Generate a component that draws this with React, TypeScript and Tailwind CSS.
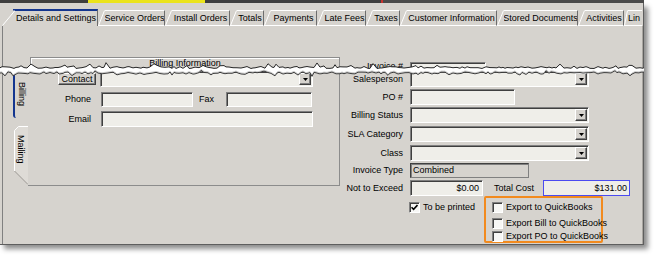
import React from "react";

function seeded(seed: number) {
  let s = seed;
  return () => {
    s = (s * 9301 + 49297) % 233280;
    return s / 233280;
  };
}

function Tear() {
  const r = seeded(11);
  const up: [number, number][] = [];
  const lo: [number, number][] = [];
  let x = 0;
  while (x < 644) {
    let y = 9.5 + (r() - 0.5) * 2;
    if (r() < 0.14) y -= 1.5 + r() * 2.5;
    up.push([x, y]);
    x += 2 + Math.floor(r() * 3);
  }
  up.push([644, 9.5]);
  x = 644;
  while (x > 0) {
    let y = 15 + (r() - 0.5) * 2.2;
    if (r() < 0.12) y += 1 + r() * 1.5;
    if (r() < 0.08) y -= 1.5 + r();
    lo.push([x, y]);
    x -= 2 + Math.floor(r() * 3);
  }
  lo.push([0, 15]);
  const ps = (a: [number, number][]) => a.map((p) => `${p[0]},${p[1].toFixed(2)}`).join(" ");
  const loShade = lo.map((p) => [p[0], p[1] - 1] as [number, number]);
  return (
    <svg
      className="absolute left-0 top-[58px] pointer-events-none"
      width="644"
      height="22"
      viewBox="0 0 644 22"
    >
      <polygon points={`${ps(up)} ${ps(lo)}`} fill="#ffffff" />
      <polyline points={ps(loShade)} fill="none" stroke="#c9c9c9" strokeWidth="1" />
      <polyline points={ps(up)} fill="none" stroke="#262626" strokeWidth="1" />
      <polyline points={ps(lo)} fill="none" stroke="#3a3a3a" strokeWidth="1" />
    </svg>
  );
}

function Arrow() {
  return (
    <div className="w-[12px] h-[12px] mr-[1px] flex items-center justify-center bg-[#d6d3ce] border border-t-white border-l-white border-b-[#404040] border-r-[#404040] shadow-[inset_-1px_-1px_0_#808080]">
      <svg width="5" height="3" viewBox="0 0 5 3">
        <polygon points="0,0 5,0 2.5,3" fill="#000" />
      </svg>
    </div>
  );
}

function Field({
  className,
  children,
  combo,
}: {
  className: string;
  children?: React.ReactNode;
  combo?: boolean;
}) {
  return (
    <div
      className={`h-full flex items-center bg-[#efeee9] border border-t-[#7f7f7f] border-l-[#7f7f7f] border-r-white border-b-white shadow-[inset_1px_1px_0_#3f3f3f] ${
        combo ? "justify-end" : ""
      } ${className}`}
    >
      {children}
      {combo && <Arrow />}
    </div>
  );
}

function Check({ checked }: { checked?: boolean }) {
  return (
    <div className="w-[11px] h-[11px] shrink-0 flex items-center justify-center bg-[#f7f7f5] border border-t-[#808080] border-l-[#808080] border-b-white border-r-white shadow-[inset_1px_1px_0_#404040]">
      {checked && (
        <svg width="7" height="7" viewBox="0 0 7 7">
          <path d="M0.5 3.2 L2.6 5.4 L6.5 1" fill="none" stroke="#000" strokeWidth="1.6" />
        </svg>
      )}
    </div>
  );
}

const tabs = [
  { label: "Service Orders", w: "w-[67px]" },
  { label: "Install Orders", w: "w-[65px]" },
  { label: "Totals", w: "w-[34px]" },
  { label: "Payments", w: "w-[53px]" },
  { label: "Late Fees", w: "w-[49px]" },
  { label: "Taxes", w: "w-[34px]" },
  { label: "Customer Information", w: "w-[97px]" },
  { label: "Stored Documents", w: "w-[81px]" },
  { label: "Activities", w: "w-[46px]" },
];

function Row({
  label,
  mt,
  h,
  children,
}: {
  label: string;
  mt: string;
  h: string;
  children: React.ReactNode;
}) {
  return (
    <div className={`flex items-center shrink-0 ${mt} ${h}`}>
      <div className="w-[63px] mr-[7px] text-right whitespace-nowrap">{label}</div>
      {children}
    </div>
  );
}

export default function App() {
  return (
    <div className="relative w-[656px] h-[259px] bg-white overflow-hidden text-[9px] leading-none text-black font-['Liberation_Sans',Arial,sans-serif]">
      {/* top strip */}
      <div className="flex h-[3px] w-[644px]">
        <div className="w-[88px] bg-[#3e3e3e]" />
        <div className="w-[117px] bg-[#ebe31a]" />
        <div className="w-[176px] bg-[#3e3e3e]" />
        <div className="w-[2px] bg-[#c8322d]" />
        <div className="flex-1 bg-[#4a4a4a]" />
      </div>

      {/* window */}
      <div className="flex flex-col w-[644px] h-[242px] bg-[#d6d3ce] border-r border-b border-[#5e5e5e] shadow-[4px_4px_5px_rgba(0,0,0,0.45)]">
        <div className="h-[6px] shrink-0" />

        {/* tab strip */}
        <div className="flex h-[17px] shrink-0 pl-[2px] overflow-hidden">
          <div className="flex w-[96px] shrink-0 h-[17px]">
            <svg width="13" height="17" viewBox="0 0 13 17" className="shrink-0">
              <path d="M0.5 16.5 L13 1.5" stroke="#ffffff" strokeWidth="1" />
              <path d="M11 0.5 L13 0.5" stroke="#13358f" strokeWidth="2" />
            </svg>
            <div className="flex-1 flex items-center justify-center border-t-2 border-t-[#13358f] border-r border-r-[#6d6d6d] whitespace-nowrap">
              Details and Settings
            </div>
          </div>
          {tabs.map((t) => (
            <div key={t.label} className={`flex shrink-0 h-[17px] ${t.w}`}>
              <svg width="7" height="17" viewBox="0 0 7 17" className="shrink-0">
                <path d="M0.5 16.5 L6.5 1.5" stroke="#ffffff" strokeWidth="1" />
                <path d="M0 16.5 L7 16.5" stroke="#ffffff" strokeWidth="1" />
              </svg>
              <div className="flex-1 flex items-center justify-center mt-[1px] border-t border-t-white border-r border-r-[#6d6d6d] border-b border-b-white whitespace-nowrap overflow-hidden">
                {t.label}
              </div>
            </div>
          ))}
          <div className="flex shrink-0 h-[17px] w-[18px]">
            <svg width="4" height="17" viewBox="0 0 4 17" className="shrink-0">
              <path d="M0.5 16.5 L3.5 1.5" stroke="#ffffff" strokeWidth="1" />
              <path d="M0 16.5 L4 16.5" stroke="#ffffff" strokeWidth="1" />
            </svg>
            <div className="flex-1 flex items-center mt-[1px] border-t border-t-white border-b border-b-white whitespace-nowrap">
              Lin
            </div>
          </div>
        </div>

        {/* content */}
        <div className="flex-1 flex flex-col ml-[2px] border-l border-[#808080] border-r border-r-[#a8a5a0] overflow-hidden">
          {/* upper part (above tear) */}
          <div className="h-[44px] shrink-0 flex overflow-hidden">
            <div className="ml-[27px] mt-[31px] w-[310px] h-[20px] shrink-0 flex justify-center pt-[1px] border-t border-l border-r border-[#8c8c8c] shadow-[inset_1px_1px_0_#ffffff]">
              Billing Information
            </div>
            <div className="flex items-start mt-[36px] h-[16px]">
              <div className="w-[63px] mr-[7px] text-right whitespace-nowrap">Invoice #</div>
              <Field className="w-[76px]" />
            </div>
          </div>

          {/* lower part (below tear) */}
          <div className="flex-1 flex">
            {/* vertical tabs */}
            <div className="ml-[10px] w-[15px] shrink-0 flex flex-col">
              <div className="h-[48px] flex justify-center pt-[12px] border-l-2 border-[#13358f] rounded-bl-[3px]">
                <span className="[writing-mode:vertical-rl] whitespace-nowrap">Billing</span>
              </div>
              <div className="relative mt-[8px] h-[60px] flex justify-center pt-[9px]">
                <svg
                  className="absolute left-0 top-0"
                  width="15"
                  height="60"
                  viewBox="0 0 15 60"
                >
                  <path d="M15 0.5 H5.5 L1.5 4.5 V45 L15 59" fill="#dedbd6" stroke="none" />
                  <path d="M15 0.5 H5.5 L1.5 4.5 V45" fill="none" stroke="#ffffff" />
                  <path d="M1.5 45 L15 58.5" fill="none" stroke="#9a9792" />
                </svg>
                <span className="relative [writing-mode:vertical-rl] whitespace-nowrap">Mailing</span>
              </div>
            </div>

            {/* billing panel */}
            <div className="w-[312px] h-[116px] shrink-0 flex flex-col border-r border-b border-[#8c8c8c]">
              <div className="flex items-center mt-[1px] h-[16px]">
                <div className="w-[69px] flex justify-end pr-[1px]">
                  <div className="w-[38px] h-[12px] flex items-center justify-center bg-[#d6d3ce] border border-t-white border-l-white border-b-[#404040] border-r-[#404040] shadow-[inset_-1px_-1px_0_#808080]">
                    Contact
                  </div>
                </div>
                <Field combo className="ml-[3px] w-[213px]" />
              </div>
              <div className="flex items-center mt-[5px] h-[15px]">
                <div className="w-[69px] text-right pr-[6px]">Phone</div>
                <Field className="ml-[4px] w-[92px]" />
                <div className="ml-[6px] w-[27px]">Fax</div>
                <Field className="w-[86px]" />
              </div>
              <div className="flex items-center mt-[4px] h-[16px]">
                <div className="w-[69px] text-right pr-[6px]">Email</div>
                <Field className="ml-[4px] w-[212px]" />
              </div>
            </div>

            {/* right form */}
            <div className="flex flex-col">
              <Row label="Salesperson" mt="mt-[1px]" h="h-[16px]">
                <Field combo className="w-[179px]" />
              </Row>
              <Row label="PO #" mt="mt-[2px]" h="h-[16px]">
                <Field className="w-[105px]" />
              </Row>
              <Row label="Billing Status" mt="mt-[2px]" h="h-[16px]">
                <Field combo className="w-[179px]" />
              </Row>
              <Row label="SLA Category" mt="mt-[3px]" h="h-[16px]">
                <Field combo className="w-[179px]" />
              </Row>
              <Row label="Class" mt="mt-[3px]" h="h-[16px]">
                <Field combo className="w-[179px]" />
              </Row>
              <Row label="Invoice Type" mt="mt-[2px]" h="h-[15px]">
                <div className="h-full w-[119px] flex items-center pl-[2px] bg-[#d6d3ce] border border-t-[#404040] border-l-[#404040] border-b-[#808080] border-r-[#808080] shadow-[inset_1px_1px_0_#808080]">
                  Combined
                </div>
              </Row>
              <Row label="Not to Exceed" mt="mt-[2px]" h="h-[16px]">
                <Field className="w-[73px] justify-end pr-[3px]">$0.00</Field>
                <div className="ml-[11px] w-[49px] whitespace-nowrap">Total Cost</div>
                <div className="h-full w-[87px] flex items-center justify-end pr-[2px] bg-[#efeee9] border border-[#4b4bf0]">
                  $131.00
                </div>
              </Row>
              <div className="flex items-start">
                <div className="ml-[69px] w-[75px] mt-[6px] flex items-center">
                  <Check checked />
                  <span className="ml-[3px] whitespace-nowrap">To be printed</span>
                </div>
                <div className="w-[119px] h-[47px] border-2 border-[#f28a1e] rounded-[2px] pl-[6px] flex flex-col">
                  <div className="mt-[4px] h-[11px] flex items-center">
                    <Check />
                    <span className="ml-[3px] whitespace-nowrap">Export to QuickBooks</span>
                  </div>
                  <div className="mt-[5px] h-[11px] flex items-center">
                    <Check />
                    <span className="ml-[3px] whitespace-nowrap">Export Bill to QuickBooks</span>
                  </div>
                  <div className="mt-[2px] h-[11px] flex items-center">
                    <Check />
                    <span className="ml-[3px] whitespace-nowrap">Export PO to QuickBooks</span>
                  </div>
                </div>
              </div>
            </div>
          </div>
        </div>
      </div>

      <Tear />
    </div>
  );
}
